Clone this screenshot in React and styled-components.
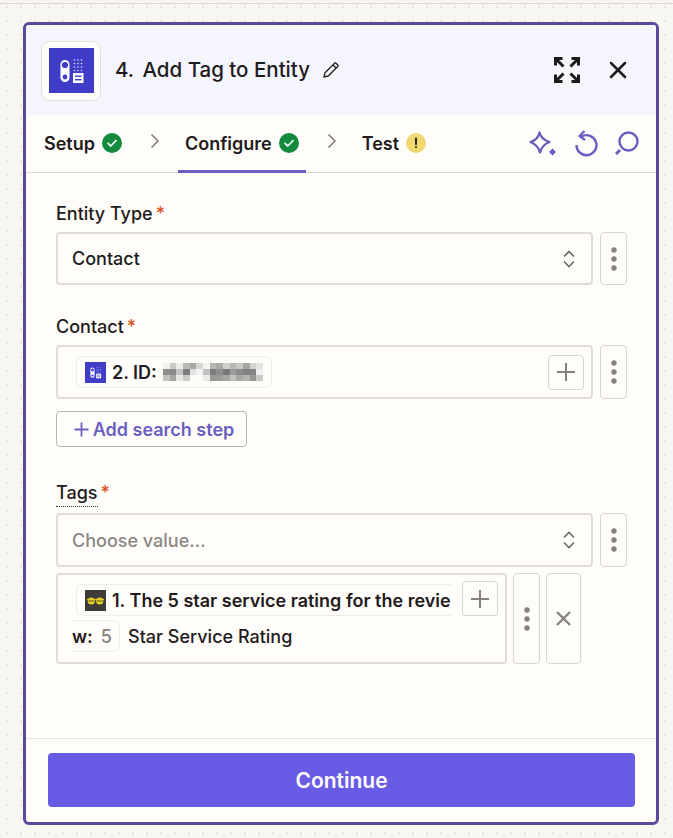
import React from "react";
import styled, { createGlobalStyle } from "styled-components";

const Global = createGlobalStyle`
  html, body { margin: 0; padding: 0; }
  body {
    width: 673px; height: 838px; overflow: hidden;
    font-family: Inter, "Noto Sans", sans-serif;
    color: #1f1a1c;
    background-color: #f8f6f2;
    background-image: radial-gradient(#e9e4dc 0.8px, transparent 1px);
    background-size: 14px 14px;
  }
  svg { flex: none; }
`;
const Page = styled.div`
  height: 838px; box-sizing: border-box; padding: 18px 14px 12px 23px;
  border-top: 1px solid #dcd8d0; margin-top: 3px;
`;
const Card = styled.div`
  width: 636px; height: 803px; box-sizing: border-box;
  border: 3px solid #5b4a9c; border-radius: 6px; background: #fffdf9;
  display: flex; flex-direction: column; overflow: hidden;
`;
const Header = styled.header`
  height: 90px; flex: none; background: #f5f5fd; display: flex; align-items: center;
  padding: 0 29px 0 15px; box-sizing: border-box;
`;
const LogoFrame = styled.div`
  width: 60px; height: 60px; box-sizing: border-box; border: 1px solid #e2dfdc; border-radius: 8px;
  background: #fffdf9; display: flex; align-items: center; justify-content: center;
  margin-right: 14px; margin-top: 1px;
`;
const Title = styled.h1`
  margin: 0; font-size: 20.5px; font-weight: 500; line-height: 26px; white-space: nowrap;
`;
const TitleNum = styled.span`margin-right: 3px;`;
const EditIcon = styled.span`display: flex; margin-left: 12px;`;
const Spacer = styled.div`flex: 1;`;
const HeadActions = styled.div`display: flex; align-items: center; gap: 29px;`;
const Tabs = styled.nav`
  height: 58px; flex: none; box-sizing: border-box; border-bottom: 1px solid #dcd9d3;
  display: flex; align-items: stretch; padding: 0 17px 0 15px;
`;
const Tab = styled.div`
  display: flex; align-items: center; gap: 7px; font-size: 18px; font-weight: 600;
  position: relative; padding: 0 ${p => p.$px}px; margin-left: ${p => p.$ml || 0}px; padding-bottom: 1px;
  ${p => p.$active && `&::after { content: ""; position: absolute; left: 0; right: 0; bottom: -1px; height: 3px; background: #6a5fc1; }`}
`;
const Chevron = styled.div`display: flex; align-items: center; margin-left: ${p => p.$ml}px; padding-bottom: 5px;`;
const TabTools = styled.div`margin-left: auto; display: flex; align-items: center; gap: 16px;`;
const Body = styled.main`
  flex: 1; padding: 30px 29px 0 30px; box-sizing: border-box; display: flex; flex-direction: column;
`;
const Label = styled.div`
  font-size: 18px; font-weight: 500; line-height: 20px; display: flex; gap: 3px;
  padding-top: ${p => (p.$raised ? 0 : 1)}px; margin-bottom: ${p => (p.$raised ? 10 : 8)}px;
`;
const LabelText = styled.span`
  ${p => p.$dotted && `border-bottom: 1.5px dotted #333; padding-bottom: 2px; margin-bottom: -4px;`}
`;
const Star = styled.span`color: #d9541e; font-size: 18px;`;
const Row = styled.div`display: flex; gap: ${p => p.$gap || 7}px; margin-bottom: ${p => p.$mb || 0}px;`;
const Field = styled.div`
  flex: 1; height: ${p => p.$h || 53}px; box-sizing: border-box;
  border: 2px solid #e0ddd7; border-radius: 4px; background: #fffdf9;
  display: flex; align-items: center; padding: 0 15px 0 14px; justify-content: space-between;
  font-size: 18px; font-weight: 500; color: ${p => (p.$muted ? "#8a8883" : "#201b1d")};
`;
const SideBtn = styled.div`
  width: ${p => p.$w || 27}px; height: ${p => p.$h || 53}px; box-sizing: border-box; flex: none;
  border: 1px solid #d9d6d0; border-radius: 4px; display: flex; align-items: center; justify-content: center;
`;
const Chip = styled.div`
  height: 32px; box-sizing: border-box; display: inline-flex; align-items: center; gap: 6px;
  border: 1px solid #efece7; border-radius: 7px; padding: 0 8px; font-size: 18px; font-weight: 600;
  white-space: nowrap;
`;
const PlusBtn = styled.div`
  width: 36px; height: 35px; box-sizing: border-box; flex: none; border: 1px solid #d9d6d0; border-radius: 4px;
  display: flex; align-items: center; justify-content: center; background: #fffdf9;
`;
const ContactField = styled(Field)`padding: 0 7px 0 18px;`;
const AddStep = styled.div`
  width: 191px; height: 36px; box-sizing: border-box; margin-top: 12px; margin-bottom: 36px;
  border: 1px solid #b8b5b1; border-radius: 4px; display: flex; align-items: center; justify-content: center; gap: 4px;
  color: #6a5fc1; font-size: 18px; font-weight: 600; padding-left: 5px;
`;
const MultiField = styled.div`
  width: 451px; height: 91px; box-sizing: border-box; flex: none; border: 2px solid #e0ddd7; border-radius: 4px;
  padding: 6px 7px 0 18px; display: flex; flex-direction: column; gap: 4px;
`;
const MultiLine = styled.div`display: flex; align-items: center; gap: 11px;`;
const OpenEndChip = styled(Chip)`
  width: 375px; flex: none; border-right: none; border-radius: 7px 0 0 7px; padding-right: 0; margin-top: 3px;
`;
const ContChip = styled(Chip)`
  margin-left: -4px; border-left: none; border-radius: 0 7px 7px 0; padding: 0 7px 0 0; gap: 8px;
`;
const Five = styled.span`color: #85827d; font-weight: 500;`;
const Plain = styled.span`font-size: 18px; font-weight: 500; margin-left: -3px;`;
const Footer = styled.footer`
  flex: none; height: 84px; box-sizing: border-box; border-top: 1px solid #e6e3de; padding: 14px 21px 0 22px;
`;
const Continue = styled.button`
  width: 100%; height: 54px; border: none; border-radius: 4px; background: #695ce4; color: #fffdf9;
  font: 600 21px Inter, sans-serif; padding: 0;
`;
const Blur = styled.svg`display: block; flex: none;`;

const BrandIcon = ({ size }) => (
  <svg width={size} height={size} viewBox="0 0 45 45">
    <rect width="45" height="45" fill="#3f3dc8" />
    <rect x="11.5" y="12" width="9" height="22" rx="4.5" fill="#fff" />
    <circle cx="16" cy="17" r="3.1" fill="#3f3dc8" />
    <circle cx="16" cy="29" r="2.4" fill="#3f3dc8" />
    <g fill="#dfe0fa">
      {[12, 15.5, 19, 22.5].map(y => [25.5, 29, 32.5].map(x => (
        <circle key={`${x}-${y}`} cx={x} cy={y} r="0.8" />
      )))}
    </g>
    <rect x="24" y="25" width="10.5" height="10" fill="#fff" />
    <rect x="26" y="27.5" width="6.5" height="1.4" fill="#3f3dc8" />
    <rect x="26" y="31" width="6.5" height="1.4" fill="#3f3dc8" />
  </svg>
);
const Glasses = () => (
  <svg width="21" height="21" viewBox="0 0 21 21">
    <rect width="21" height="21" fill="#3d3c3a" />
    <path d="M2 9.500h17" stroke="#d8c320" strokeWidth="1.300" />
    <circle cx="6.300" cy="11" r="3.600" fill="#e8cf22" />
    <circle cx="14.700" cy="11" r="3.600" fill="#e8cf22" />
    <path d="M3.500 11h5.600M12 11h5.600" stroke="#5e5418" strokeWidth="1" />
  </svg>
);
const Check = () => (
  <svg width="20" height="20" viewBox="0 0 20 20">
    <circle cx="10" cy="10" r="10" fill="#138a3e" />
    <path d="M6 10.400l2.800 2.600L14 7.600" fill="none" stroke="#e9f7ee" strokeWidth="1.800" strokeLinecap="round" strokeLinejoin="round" />
  </svg>
);
const Warn = () => (
  <svg width="20" height="20" viewBox="0 0 20 20">
    <circle cx="10" cy="10" r="10" fill="#f0d872" />
    <path d="M10 5.500v5.600" stroke="#2a2418" strokeWidth="2" strokeLinecap="round" />
    <circle cx="10" cy="14" r="1.100" fill="#2a2418" />
  </svg>
);
const ChevronRight = () => (
  <svg width="10" height="16" viewBox="0 0 10 16"><path d="M1.500 1.500L8 8l-6.500 6.500" fill="none" stroke="#7f7c78" strokeWidth="1.500" /></svg>
);
const Pencil = () => (
  <svg width="18" height="18" viewBox="0 0 18 18" fill="none" stroke="#2a2527" strokeWidth="1.400" strokeLinejoin="round">
    <path d="M2 16l1-4.200L12.600 2.200a1 1 0 0 1 1.400 0l1.800 1.800a1 1 0 0 1 0 1.400L6.200 15z" />
    <path d="M11 4l3 3" />
  </svg>
);
const Expand = () => (
  <svg width="26" height="26" viewBox="0 0 26 26" fill="none" stroke="#1f1a1c" strokeWidth="3">
    <path d="M1.500 8.500v-7h7M17.500 1.500h7v7M24.500 17.500v7h-7M8.500 24.500h-7v-7" />
    <path d="M2.500 2.500l7 7M23.500 2.500l-7 7M23.500 23.500l-7-7M2.500 23.500l7-7" />
  </svg>
);
const Close = () => (
  <svg width="18" height="18" viewBox="0 0 18 18"><path d="M2 2l14 14M16 2L2 16" stroke="#1f1a1c" strokeWidth="2.500" strokeLinecap="round" /></svg>
);
const Sparkle = () => (
  <svg width="29" height="27" viewBox="0 0 29 27" fill="none">
    <path d="M10.500 2.500c1 4.500 4 7.500 10 9.500-5.500 2-8 5-9.500 10.500C9.500 17 6.500 14 1.500 12c5-1.500 8-4.500 9-9.500z" stroke="#6a5fc1" strokeWidth="2.300" strokeLinejoin="round" />
    <path d="M23.500 18.500l3.500 3.500-3.500 3.500-3.500-3.500z" fill="#6a5fc1" />
  </svg>
);
const Undo = () => (
  <svg width="24" height="27" viewBox="0 0 24 27" fill="none" stroke="#6a5fc1" strokeWidth="2.400">
    <path d="M7.500 6.500A10 10 0 1 1 2.500 15" />
    <path d="M10.500 1L5.500 6l5.500 4" strokeLinejoin="round" />
  </svg>
);
const Search = () => (
  <svg width="25" height="25" viewBox="0 0 25 25" fill="none" stroke="#6a5fc1" strokeWidth="2.400">
    <circle cx="14.500" cy="10.500" r="9" />
    <path d="M6 19l-4 4" strokeWidth="3" />
  </svg>
);
const UpDown = () => (
  <svg width="14" height="20" viewBox="0 0 14 20" fill="none" stroke="#6f6d69" strokeWidth="1.700">
    <path d="M2 7.500L7 2.500l5 5M2 12.500l5 5 5-5" />
  </svg>
);
const Dots = () => (
  <svg width="6" height="24" viewBox="0 0 6 24" fill="#85827d">
    <circle cx="3" cy="3" r="2.700" /><circle cx="3" cy="12" r="2.700" /><circle cx="3" cy="21" r="2.700" />
  </svg>
);
const Plus = () => (
  <svg width="20" height="20" viewBox="0 0 20 20"><path d="M10 1v18M1 10h18" stroke="#85827d" strokeWidth="2" /></svg>
);
const SmallPlus = () => (
  <svg width="15" height="15" viewBox="0 0 15 15"><path d="M7.500 0.500v14M0.500 7.500h14" stroke="#6a5fc1" strokeWidth="1.800" /></svg>
);
const Times = () => (
  <svg width="15" height="15" viewBox="0 0 15 15"><path d="M1 1l13 13M14 1L1 14" stroke="#85827d" strokeWidth="2.400" /></svg>
);
const shades = [
  "#f1f1f0 #c9c9c8 #ebebea #b9b9b8 #a6a6a5 #d8d8d7 #f4f4f3 #b5b5b4 #a9a9a8 #d0d0cf #b8b8b7 #c8c8c7 #a5a5a4 #d3d3d2 #e3e3e2",
  "#8f8f8e #8a8a89 #c3c3c2 #7d7d7c #e2e2e1 #f3f3f2 #c0c0bf #7c7c7b #8f8f8e #777776 #9c9c9b #8b8b8a #7f7f7e #858584 #f0f0ef",
  "#c1c1c0 #a5a5a4 #e6e6e5 #c9c9c8 #fbfbfa #fbfbfa #ecebea #989897 #9a9a99 #a6a6a5 #c0c0bf #a8a8a7 #b3b3b2 #979796 #c9c9c8",
].map(r => r.split(" "));
const Pixelated = () => (
  <Blur width="100" height="18" viewBox="0 0 100 18" shapeRendering="crispEdges">
    {shades.map((row, y) => row.map((c, x) => (
      <rect key={`${x}-${y}`} x={x * 6.67} y={y * 6} width="6.8" height="6.1" fill={c} />
    )))}
  </Blur>
);

export default function App() {
  return (
    <>
      <Global />
      <Page>
        <Card>
          <Header>
            <LogoFrame><BrandIcon size={45} /></LogoFrame>
            <Title><TitleNum>4.</TitleNum> Add Tag to Entity</Title>
            <EditIcon><Pencil /></EditIcon>
            <Spacer />
            <HeadActions><Expand /><Close /></HeadActions>
          </Header>
          <Tabs>
            <Tab $px={3}>Setup <Check /></Tab>
            <Chevron $ml={25}><ChevronRight /></Chevron>
            <Tab $px={7} $ml={18} $active>Configure <Check /></Tab>
            <Chevron $ml={21}><ChevronRight /></Chevron>
            <Tab $px={0} $ml={25}>Test <Warn /></Tab>
            <TabTools><Sparkle /><Undo /><Search /></TabTools>
          </Tabs>
          <Body>
            <Label><LabelText>Entity Type</LabelText><Star>*</Star></Label>
            <Row $mb={31}>
              <Field>Contact <UpDown /></Field>
              <SideBtn><Dots /></SideBtn>
            </Row>
            <Label><LabelText>Contact</LabelText><Star>*</Star></Label>
            <Row>
              <ContactField $h={54}>
                <Chip><BrandIcon size={21} />2. ID: <Pixelated /></Chip>
                <PlusBtn><Plus /></PlusBtn>
              </ContactField>
              <SideBtn $h={54}><Dots /></SideBtn>
            </Row>
            <AddStep><SmallPlus />Add search step</AddStep>
            <Label $raised><LabelText $dotted>Tags</LabelText><Star>*</Star></Label>
            <Row $mb={6}>
              <Field $muted $h={54}>Choose value... <UpDown /></Field>
              <SideBtn $h={54}><Dots /></SideBtn>
            </Row>
            <Row $gap={6}>
              <MultiField>
                <MultiLine>
                  <OpenEndChip><Glasses />1. The 5 star service rating for the revie</OpenEndChip>
                  <PlusBtn><Plus /></PlusBtn>
                </MultiLine>
                <MultiLine>
                  <ContChip>w: <Five>5</Five></ContChip>
                  <Plain>Star Service Rating</Plain>
                </MultiLine>
              </MultiField>
              <SideBtn $h={91}><Dots /></SideBtn>
              <SideBtn $w={35} $h={91}><Times /></SideBtn>
            </Row>
          </Body>
          <Footer><Continue>Continue</Continue></Footer>
        </Card>
      </Page>
    </>
  );
}
